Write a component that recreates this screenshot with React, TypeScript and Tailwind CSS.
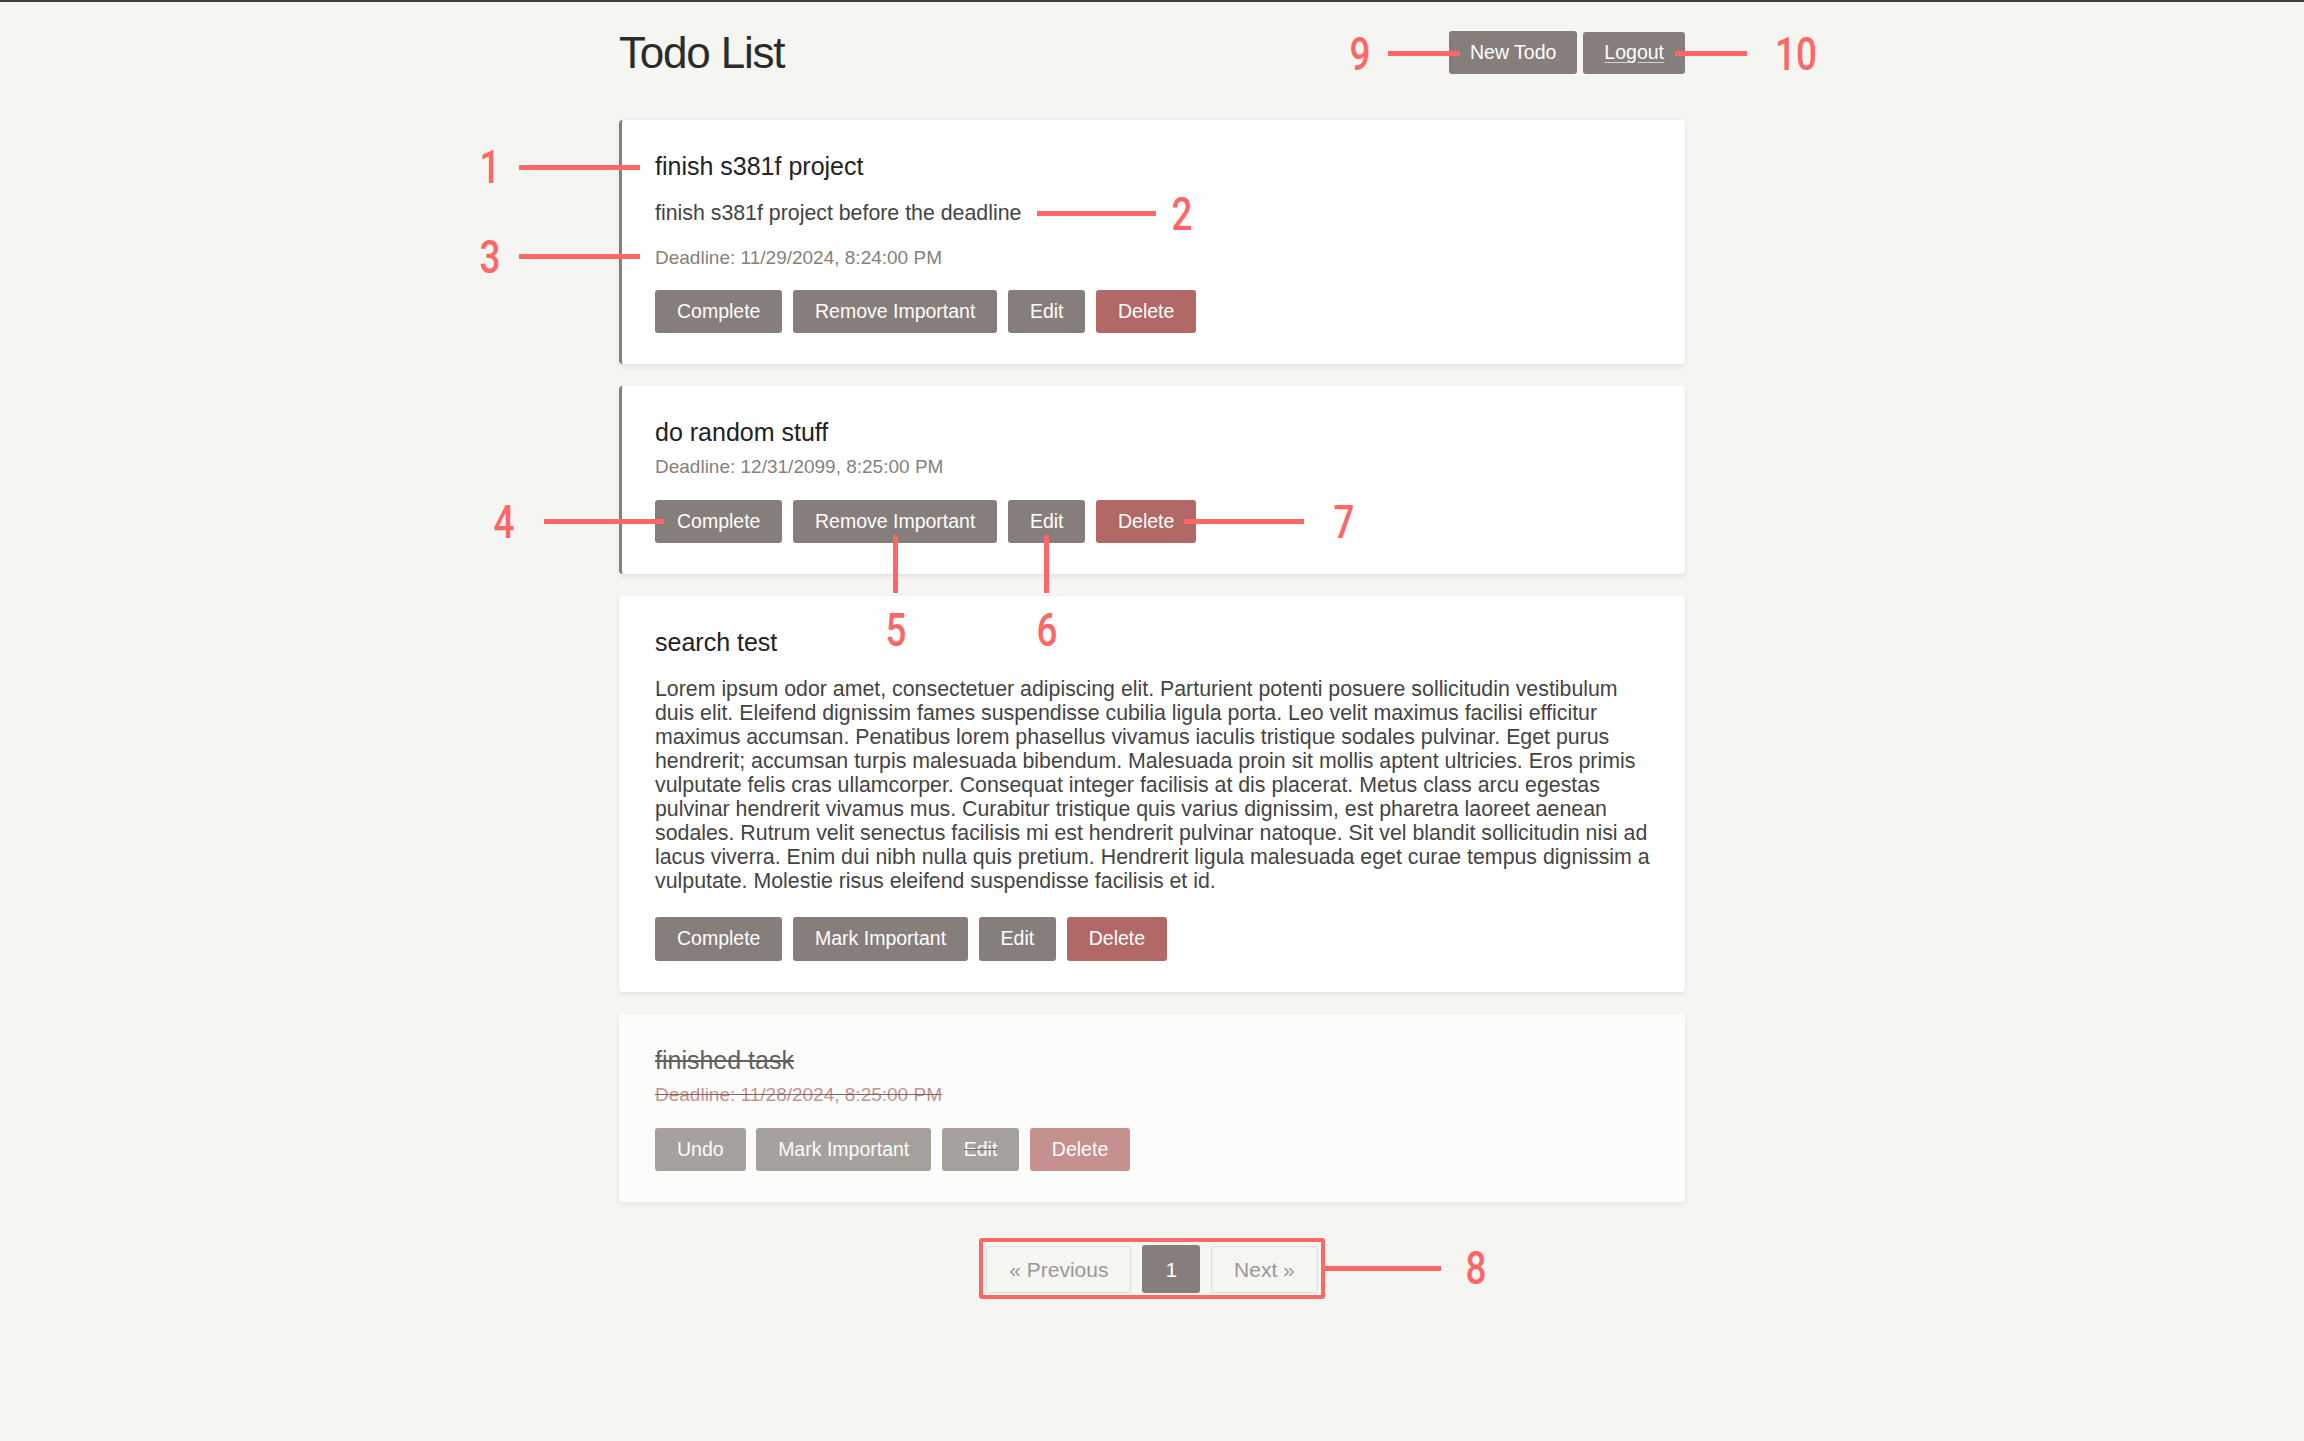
import React from "react";

const BTN =
  "h-[43.4px] px-[22px] flex items-center justify-center rounded-[3px] text-white text-[19.5px] leading-none whitespace-nowrap";

function Btn({ label, red, strike }: { label: string; red?: boolean; strike?: boolean }) {
  return (
    <button
      className={
        BTN +
        (red ? " bg-[#b26866]" : " bg-[#867e7a]") +
        (strike ? " line-through decoration-[#333]" : "")
      }
    >
      {label}
    </button>
  );
}

function Num({ n, className }: { n: string; className: string }) {
  return (
    <div className={"absolute -translate-x-1/2 -translate-y-1/2 " + className}>
      <span className="block scale-x-[0.8] text-[46px] leading-none font-medium text-[#ff6666] font-['Roboto',sans-serif]">
        {n}
      </span>
    </div>
  );
}

const CARD =
  "rounded-[4px] bg-white shadow-[0_2px_5px_rgba(0,0,0,0.09)] border-l-[3px] pt-[31px] pb-[31px] pl-[33px] pr-[31px] flex flex-col";

const LOREM =
  "Lorem ipsum odor amet, consectetuer adipiscing elit. Parturient potenti posuere sollicitudin vestibulum duis elit. Eleifend dignissim fames suspendisse cubilia ligula porta. Leo velit maximus facilisi efficitur maximus accumsan. Penatibus lorem phasellus vivamus iaculis tristique sodales pulvinar. Eget purus hendrerit; accumsan turpis malesuada bibendum. Malesuada proin sit mollis aptent ultricies. Eros primis vulputate felis cras ullamcorper. Consequat integer facilisis at dis placerat. Metus class arcu egestas pulvinar hendrerit vivamus mus. Curabitur tristique quis varius dignissim, est pharetra laoreet aenean sodales. Rutrum velit senectus facilisis mi est hendrerit pulvinar natoque. Sit vel blandit sollicitudin nisi ad lacus viverra. Enim dui nibh nulla quis pretium. Hendrerit ligula malesuada eget curae tempus dignissim a vulputate. Molestie risus eleifend suspendisse facilisis et id.";

export default function App() {
  return (
    <div className="relative min-h-screen w-full bg-[#f5f5f1] font-['Liberation_Sans',Arial,sans-serif]">
      <div className="h-[2px] w-full bg-[#3d3d3d]" />
      <div className="mx-auto w-[1066px]">
        {/* header */}
        <div className="mt-[28.7px] flex h-[43.4px] items-center justify-between">
          <h1 className="text-[44px] leading-[44px] tracking-[-1.2px] text-[#2b2b2b] translate-y-[1px]">
            Todo List
          </h1>
          <div className="flex items-end gap-[6px] h-[43.4px]">
            <button className="h-[43.4px] px-[21px] flex items-center rounded-[3px] bg-[#867e7a] text-white text-[19.5px] leading-none">
              New Todo
            </button>
            <a className="h-[42px] px-[21px] flex items-center rounded-[3px] bg-[#867e7a] text-white text-[19.5px] leading-none underline decoration-[#d5d2d0] underline-offset-[3px]">
              Logout
            </a>
          </div>
        </div>

        {/* cards */}
        <div className="mt-[46px] flex flex-col gap-[22px]">
          <div className={CARD + " border-[#867e7a]"}>
            <div className="text-[25px] leading-[30px] text-[#222]">finish s381f project</div>
            <p className="mt-[20px] text-[21.33px] leading-[24px] text-[#444]">
              finish s381f project before the deadline
            </p>
            <div className="mt-[20.5px] text-[19px] leading-[24px] text-[#877f7b]">
              Deadline: 11/29/2024, 8:24:00 PM
            </div>
            <div className="mt-[20px] flex gap-[10.5px]">
              <Btn label="Complete" />
              <Btn label="Remove Important" />
              <Btn label="Edit" />
              <Btn label="Delete" red />
            </div>
          </div>

          <div className={CARD + " border-[#867e7a]"}>
            <div className="text-[25px] leading-[30px] text-[#222]">do random stuff</div>
            <div className="mt-[8px] text-[19px] leading-[24px] text-[#877f7b]">
              Deadline: 12/31/2099, 8:25:00 PM
            </div>
            <div className="mt-[21px] flex gap-[10.5px]">
              <Btn label="Complete" />
              <Btn label="Remove Important" />
              <Btn label="Edit" />
              <Btn label="Delete" red />
            </div>
          </div>

          <div className={CARD + " border-transparent"}>
            <div className="text-[25px] leading-[30px] text-[#222]">search test</div>
            <p className="mt-[20px] text-[21.33px] leading-[24px] text-[#444]">{LOREM}</p>
            <div className="mt-[24px] flex gap-[10.5px]">
              <Btn label="Complete" />
              <Btn label="Mark Important" />
              <Btn label="Edit" />
              <Btn label="Delete" red />
            </div>
          </div>

          <div className={CARD + " border-transparent opacity-70"}>
            <div className="text-[25px] leading-[30px] text-[#222] line-through">finished task</div>
            <div className="mt-[8px] text-[19px] leading-[24px] text-[#b26866] line-through decoration-[#333]">
              Deadline: 11/28/2024, 8:25:00 PM
            </div>
            <div className="mt-[21px] flex gap-[10.5px]">
              <Btn label="Undo" />
              <Btn label="Mark Important" />
              <Btn label="Edit" strike />
              <Btn label="Delete" red />
            </div>
          </div>
        </div>

        {/* pagination */}
        <div className="mt-[43px] flex items-center justify-center gap-[11px]">
          <button className="h-[47px] px-[22px] flex items-center rounded-[3px] border border-[#dcdbd7] text-[#9a9896] text-[21px] leading-none">
            « Previous
          </button>
          <button className="h-[48px] px-[23px] flex items-center rounded-[3px] bg-[#867e7a] text-white text-[21px] leading-none">
            1
          </button>
          <button className="h-[47px] px-[22px] flex items-center rounded-[3px] border border-[#dcdbd7] text-[#9a9896] text-[21px] leading-none">
            Next »
          </button>
        </div>
      </div>

      {/* annotations */}
      <div className="pointer-events-none absolute inset-0">
        <div className="absolute left-[519px] top-[165px] h-[5px] w-[121px] bg-[#ff6666]" />
        <Num n="1" className="left-[490px] top-[167px]" />

        <div className="absolute left-[1037px] top-[211px] h-[5px] w-[119px] bg-[#ff6666]" />
        <Num n="2" className="left-[1182px] top-[214px]" />

        <div className="absolute left-[519px] top-[254px] h-[5px] w-[121px] bg-[#ff6666]" />
        <Num n="3" className="left-[490px] top-[257px]" />

        <div className="absolute left-[544px] top-[519px] h-[5px] w-[120px] bg-[#ff6666]" />
        <Num n="4" className="left-[504px] top-[522px]" />

        <div className="absolute left-[892.5px] top-[535px] h-[58px] w-[5px] bg-[#ff6666]" />
        <Num n="5" className="left-[896px] top-[630px]" />

        <div className="absolute left-[1044px] top-[535px] h-[58px] w-[5px] bg-[#ff6666]" />
        <Num n="6" className="left-[1047px] top-[630px]" />

        <div className="absolute left-[1184px] top-[519px] h-[5px] w-[120px] bg-[#ff6666]" />
        <Num n="7" className="left-[1344px] top-[522px]" />

        <div className="absolute left-[979px] top-[1238px] h-[61px] w-[346px] rounded-[3px] border-[4px] border-[#ff6666]" />
        <div className="absolute left-[1325px] top-[1266px] h-[5px] w-[116px] bg-[#ff6666]" />
        <Num n="8" className="left-[1476px] top-[1268px]" />

        <div className="absolute left-[1388px] top-[51px] h-[5px] w-[72px] bg-[#ff6666]" />
        <Num n="9" className="left-[1360px] top-[54px]" />

        <div className="absolute left-[1675px] top-[51px] h-[5px] w-[72px] bg-[#ff6666]" />
        <Num n="10" className="left-[1796px] top-[54px]" />
      </div>
    </div>
  );
}
